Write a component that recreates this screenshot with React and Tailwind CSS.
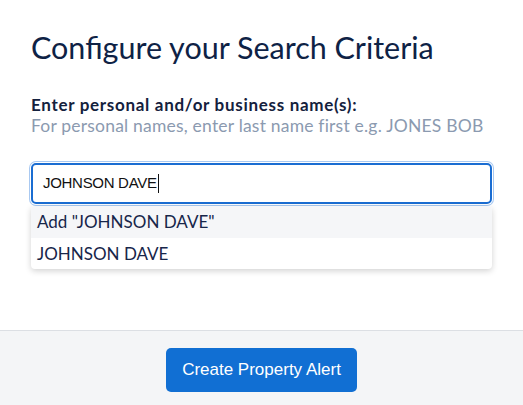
import React from 'react';

const sans = { fontFamily: 'Lato, "Open Sans", sans-serif' };

export default function App() {
    return (
        <div className="w-[523px] h-[405px] bg-white flex flex-col overflow-hidden">
            {/* Form body */}
            <div className="flex-1 px-[31px] pt-[27px]" style={sans}>
                <h1 className="text-[30.5px] leading-[40px] text-[#0e2245]">Configure your Search Criteria</h1>
                <p className="mt-[27px] text-[17px] leading-[21px] font-bold tracking-[0.7px] text-[#14213d]">Enter personal and/or business name(s):</p>
                <p className="text-[17.5px] leading-[21px] tracking-[0.2px] text-[#8b9ab0]">For personal names, enter last name first e.g. JONES BOB</p>

                <div className="relative mt-[27px]">
                    <div className="h-[41px] rounded-[5px] border-2 border-[#1a6dd2] bg-white flex items-center px-[10px] shadow-[0_0_0_1px_#ffffff,0_0_0_2px_#a9c9f1]">
                        <span className="text-[15px] text-[#111] tracking-[-0.3px]" style={{ fontFamily: '"Liberation Sans", Arial, sans-serif' }}>JOHNSON DAVE</span>
                        <span className="w-px h-[19px] bg-[#111] ml-px" />
                    </div>
                    {/* Suggestions menu */}
                    <div className="absolute left-0 right-0 top-[43px] bg-white rounded-[4px] shadow-[0_2px_6px_rgba(0,0,0,0.18)] overflow-hidden">
                        <div className="h-[32px] px-[6px] flex items-center bg-[#f5f6f8] text-[17px] text-[#17264a]">Add "JOHNSON DAVE"</div>
                        <div className="h-[31px] px-[6px] flex items-center text-[17px] text-[#17264a]">JOHNSON DAVE</div>
                    </div>
                </div>
            </div>

            {/* Footer */}
            <div className="h-[75px] border-t border-[#dcdfe4] bg-[#f4f5f7] flex justify-center pt-[17px]">
                <button className="w-[191px] h-[44px] rounded-[5px] bg-[#116fd3] text-white text-[17px]" style={{ fontFamily: '"Liberation Sans", Arial, sans-serif' }}>
                    Create Property Alert
                </button>
            </div>
        </div>
    );
}
